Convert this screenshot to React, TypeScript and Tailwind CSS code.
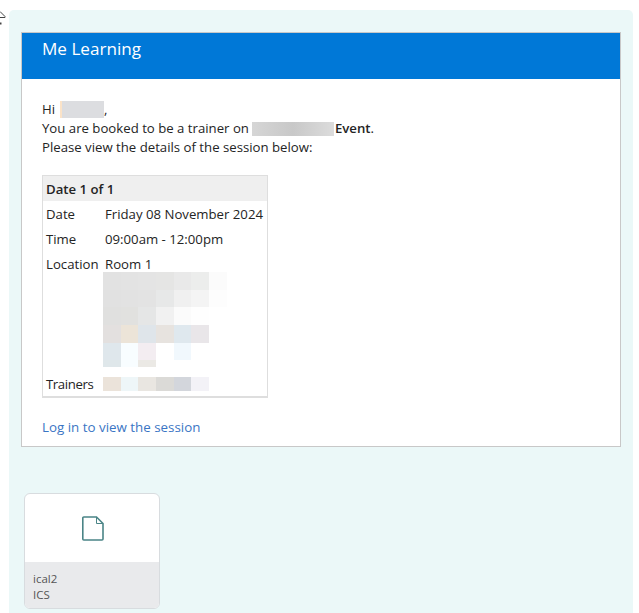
const F = "font-['Open_Sans','Noto_Sans',sans-serif]";

const W = ["w-[18px]", "w-[17px]", "w-[18px]", "w-[18px]", "w-[17px]", "w-[18px]", "w-[18px]"];

function Row({ cells, h }: { cells: string[]; h: string }) {
  return (
    <div className="flex">
      {cells.map((c, i) => (
        <div key={i} className={`${W[i]} ${h} ${c} shrink-0`} />
      ))}
    </div>
  );
}

export default function App() {
  return (
    <div className={`${F} relative w-[639px] h-[613px] bg-white overflow-hidden pt-[10px] pl-[9px] text-[13.2px] leading-[19px] text-[#242424]`}>
      <svg className="absolute left-0 top-[10px]" width="6" height="16" viewBox="0 0 6 16" fill="none" stroke="#444" strokeWidth="1">
        <path d="M0 1.5l5 5v1h-5" />
        <path d="M0 13.5h1.5" strokeWidth="2" />
      </svg>
      <div className="w-[624px] h-[603px] bg-[#ebf8f8] rounded-t-[5px] pt-[22px] pl-[12px]">
        <div className="w-[600px] h-[415px] bg-white border border-[#c8c8c8]">
          <div className="h-[46px] bg-[#0078d7] pl-[20px] pt-[4px] text-white text-[17.1px] leading-[24px]">Me Learning</div>
          <div className="pl-[20px] pt-[21px]">
            <div className="flex items-center">Hi <span className="ml-[5px] w-[44px] h-[17px] bg-[#dcdde0] border-l-[2px] border-[#fbe3c8]" />,</div>
            <div className="flex items-center">You are booked to be a trainer on<span className="ml-[3px] mr-[1px] w-[82px] h-[14px] bg-gradient-to-r from-[#d6d6d6] via-[#c8c8c8] to-[#dcdcdc]" /><b className="font-semibold">Event</b>.</div>
            <div>Please view the details of the session below:</div>
            <div className="mt-[18px] w-[226px] border border-[#dedede] border-b-2">
              <div className="h-[25px] bg-[#efefef] pl-[3px] pt-[4px] font-semibold">Date 1 of 1</div>
              <div className="flex h-[25px] pl-[3px] pt-[4px]"><span className="w-[59px]">Date</span><span>Friday 08 November 2024</span></div>
              <div className="flex h-[25px] pl-[3px] pt-[4px]"><span className="w-[59px]">Time</span><span>09:00am - 12:00pm</span></div>
              <div className="flex h-[21px] pl-[3px] pt-[4px]"><span className="w-[59px]">Location</span><span>Room 1</span></div>
              <div className="pl-[60px]">
                <Row h="h-[18px]" cells={["bg-[#e2e2e2]", "bg-[#e3e3e3]", "bg-[#e4e4e4]", "bg-[#e5e5e4]", "bg-[#e9e9e9]", "bg-[#ecedec]", "bg-[#fbfbfb]"]} />
                <Row h="h-[17px]" cells={["bg-[#e1e1e1]", "bg-[#e2e2e2]", "bg-[#e3e3e3]", "bg-[#e7e8e8]", "bg-[#f0f0f0]", "bg-[#f4f4f4]", "bg-[#fdfdfd]"]} />
                <Row h="h-[18px]" cells={["bg-[#e0e0df]", "bg-[#e1e1df]", "bg-[#e5e6e6]", "bg-[#f1f1f1]", "bg-[#fbfbfb]", "bg-[#fefefe]", "bg-white"]} />
                <Row h="h-[18px]" cells={["bg-[#e3e0df]", "bg-[#ece4d8]", "bg-[#dfe5ea]", "bg-[#e7e3df]", "bg-[#dfe8ee]", "bg-[#e9e6e9]", "bg-white"]} />
                <Row h="h-[17px]" cells={["bg-[#dfe7ec]", "bg-[#f8fdff]", "bg-[#f3edf1]", "bg-white", "bg-[#f1f8fd]", "bg-white", "bg-white"]} />
                <Row h="h-[7px]" cells={["bg-[#dfe7ea]", "bg-[#f8fdff]", "bg-[#ebe9e5]"]} />
              </div>
              <div className="flex items-center h-[29px] pl-[3px] pt-[5px]">
                <span className="w-[57px] tracking-[-0.4px]">Trainers</span>
                <Row h="h-[14px]" cells={["bg-[#ebe3da]", "bg-[#eef6f8]", "bg-[#e9e6e1]", "bg-[#dbdad7]", "bg-[#d3d6dc]", "bg-[#f3f2f7]"]} />
              </div>
            </div>
            <div className="mt-[20px] text-[#3a75c4] text-[13.35px]">Log in to view the session</div>
          </div>
        </div>
        <div className="mt-[46px] ml-[3px] w-[136px] h-[116px] rounded-[6px] border border-[#d8dcdf] overflow-hidden bg-white flex flex-col">
          <div className="h-[68px] flex items-center justify-center">
            <svg className="ml-[2px]" width="22" height="25" viewBox="0 0 22 25" fill="none" stroke="#4a8486" strokeWidth="1.6">
              <path d="M1.8 1h12.7l6.5 6.5v15.5a1 1 0 0 1-1 1h-18.2a1 1 0 0 1-1-1v-21a1 1 0 0 1 1-1z" />
              <path d="M14.5 1v6.5h6.5" strokeWidth="1" />
            </svg>
          </div>
          <div className="flex-1 bg-[#e9eaec] pl-[8px] pt-[9px] text-[11.5px] leading-[16px] text-[#555]">
            <div>ical2</div>
            <div>ICS</div>
          </div>
        </div>
      </div>
    </div>
  );
}
